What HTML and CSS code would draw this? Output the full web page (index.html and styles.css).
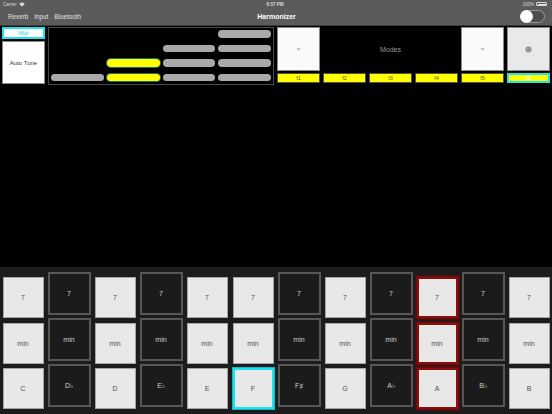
FILE: index.html
```html
<!DOCTYPE html>
<html>
<head>
<meta charset="utf-8">
<link rel="stylesheet" href="styles.css">
</head>
<body>
<div class="app">
  <div class="status">
    <div class="st-left">Carrier
      <svg class="wifi" width="6" height="5" viewBox="0 0 12 9"><path d="M6 9 L0.5 3.2 A8 8 0 0 1 11.5 3.2 Z" fill="#d8d8d8"/></svg>
    </div>
    <div class="st-center">6:57 PM</div>
    <div class="st-right">100% <span class="battery"><span class="battery-fill"></span></span></div>
  </div>
  <div class="nav">
    <div class="nav-left"><span>Reverb</span><span>Input</span><span>Bluetooth</span></div>
    <div class="nav-title">Harmonizer</div>
    <div class="nav-right"><div class="toggle"><div class="knob"></div></div></div>
  </div>
  <div class="top">
    <div class="leftcol">
      <div class="midi">Midi</div>
      <div class="autotune">Auto Tune</div>
    </div>
    <div class="pills">
      <div></div><div></div><div></div><div class="pill"></div>
      <div></div><div></div><div class="pill"></div><div class="pill"></div>
      <div></div><div class="pill on"></div><div class="pill"></div><div class="pill"></div>
      <div class="pill"></div><div class="pill on"></div><div class="pill"></div><div class="pill"></div>
    </div>
    <div class="modes">
      <div class="mbtn">&lt;</div>
      <div class="mlabel">Modes</div>
      <div class="mbtn">&gt;</div>
      <div class="mbtn gearbox">
        <svg width="7" height="7" viewBox="0 0 14 14"><circle cx="7" cy="7" r="6" fill="#8a8a8a"/><circle cx="7" cy="7" r="3.6" fill="#b8b8c4"/><circle cx="7" cy="7" r="2" fill="#6f6f7a"/></svg>
      </div>
      <div class="fbtn">f1</div>
      <div class="fbtn">f2</div>
      <div class="fbtn">f3</div>
      <div class="fbtn">f4</div>
      <div class="fbtn">f5</div>
      <div class="fbtn sel">f6</div>
    </div>
  </div>
  <div class="spacer"></div>
  <div class="keys">
    <div class="col w"><div class="key">7</div><div class="key">min</div><div class="key">C</div></div>
    <div class="col b"><div class="key">7</div><div class="key">min</div><div class="key">D&#9837;</div></div>
    <div class="col w"><div class="key">7</div><div class="key">min</div><div class="key">D</div></div>
    <div class="col b"><div class="key">7</div><div class="key">min</div><div class="key">E&#9837;</div></div>
    <div class="col w"><div class="key">7</div><div class="key">min</div><div class="key">E</div></div>
    <div class="col w"><div class="key">7</div><div class="key">min</div><div class="key cyan">F</div></div>
    <div class="col b"><div class="key">7</div><div class="key">min</div><div class="key">F&#9839;</div></div>
    <div class="col w"><div class="key">7</div><div class="key">min</div><div class="key">G</div></div>
    <div class="col b"><div class="key">7</div><div class="key">min</div><div class="key">A&#9837;</div></div>
    <div class="col w red"><div class="key">7</div><div class="key">min</div><div class="key">A</div></div>
    <div class="col b"><div class="key">7</div><div class="key">min</div><div class="key">B&#9837;</div></div>
    <div class="col w"><div class="key">7</div><div class="key">min</div><div class="key">B</div></div>
  </div>
</div>
</body>
</html>
```
FILE: styles.css
```css
* { box-sizing: border-box; }
html, body { margin: 0; padding: 0; background: #000; }
body { font-family: "Liberation Sans", Arial, sans-serif; }
.app { width: 552px; height: 414px; display: flex; flex-direction: column; background: #000; overflow: hidden; }

.status { height: 8px; background: #5b5b5b; display: grid; grid-template-columns: 1fr auto 1fr; align-items: center; padding: 0 5px 0 3px; font-size: 4.5px; color: #dcdcdc; }
.st-left { display: flex; align-items: center; gap: 2px; }
.st-center { font-weight: bold; }
.st-right { display: flex; justify-content: flex-end; align-items: center; gap: 2px; }
.battery { width: 11px; height: 4px; border: 0.5px solid #ddd; border-radius: 1px; padding: 0.5px; display: flex; }
.battery-fill { flex: 1; background: #e5e5e5; }

.nav { height: 18px; background: #5b5b5b; border-bottom: 1px solid #3a3a3a; display: grid; grid-template-columns: 1fr auto 1fr; align-items: center; padding: 0 7px 0 8px; }
.nav-left { display: flex; gap: 6px; font-size: 6.3px; color: #e2e2e2; }
.nav-title { font-size: 7px; font-weight: bold; color: #fff; }
.nav-right { display: flex; justify-content: flex-end; }
.toggle { width: 25px; height: 13px; border-radius: 7px; background: #4e4e4e; border: 1px solid #9a9a9a; position: relative; }
.knob { position: absolute; left: -1px; top: -1px; width: 13px; height: 13px; border-radius: 50%; background: #fff; box-shadow: 0 0 1px rgba(0,0,0,.4); }

.top { display: flex; gap: 3px; padding: 1px 2px 0 2px; height: 60px; }
.leftcol { width: 43px; display: flex; flex-direction: column; gap: 2px; }
.midi { height: 12px; border: 2px solid #1fe3ee; background: #fff; color: #22d8e6; font-size: 5.5px; display: flex; align-items: center; justify-content: center; }
.autotune { height: 43px; background: #fff; border: 1px solid #888; color: #333; font-size: 6px; display: flex; align-items: center; justify-content: center; }

.pills { width: 226px; height: 58px; border: 1px solid #4a4a4a; display: grid; grid-template-columns: repeat(4, 1fr); grid-template-rows: repeat(4, 7.5px); column-gap: 3px; row-gap: 7px; padding: 2px 2px; }
.pill { background: #a9a9a9; border-radius: 4px; }
.pill.on { background: #ffff00; box-shadow: 0 0 0 1px #1a6e73; }

.modes { width: 273px; display: grid; grid-template-columns: repeat(6, 43px); grid-template-rows: 44px 10px; column-gap: 3px; row-gap: 2px; }
.mbtn { background: #fafafa; border: 1px solid #8a8a8a; display: flex; align-items: center; justify-content: center; font-size: 6px; color: #555; }
.gearbox { background: #e9e9e9; }
.mlabel { grid-column: span 3; display: flex; align-items: center; justify-content: center; font-size: 7px; color: #9a9a9a; }
.fbtn { background: #ffff00; border: 1px solid #505050; display: flex; align-items: center; justify-content: center; font-size: 5.5px; color: #555; }
.fbtn.sel { border: 2px solid #1fe3ee; color: #fff; }

.spacer { flex: 1; }

.keys { height: 147px; background: #1c1c1c; display: grid; grid-template-columns: repeat(12, 46px); }
.col { display: flex; flex-direction: column; align-items: center; }
.col.w { padding-top: 10px; gap: 4.5px; }
.col.b { padding-top: 5px; gap: 3px; }
.key { display: flex; align-items: center; justify-content: center; font-size: 7px; }
.col.w .key { width: 41px; height: 41px; background: #e8e8e8; border: 1px solid #a5a5a5; color: #505050; }
.col.b .key { width: 43px; height: 43px; background: #1b1b1b; border: 2px solid #575757; color: #d0d0d0; }
.col.w.red .key { border: 2px solid #8c0f0f; box-shadow: 0 0 0 1.5px #6a0a0a; }
.col.w .key.cyan { border: 2px solid #19e4ee; box-shadow: 0 0 0 1px #0fb8c4; }
```
